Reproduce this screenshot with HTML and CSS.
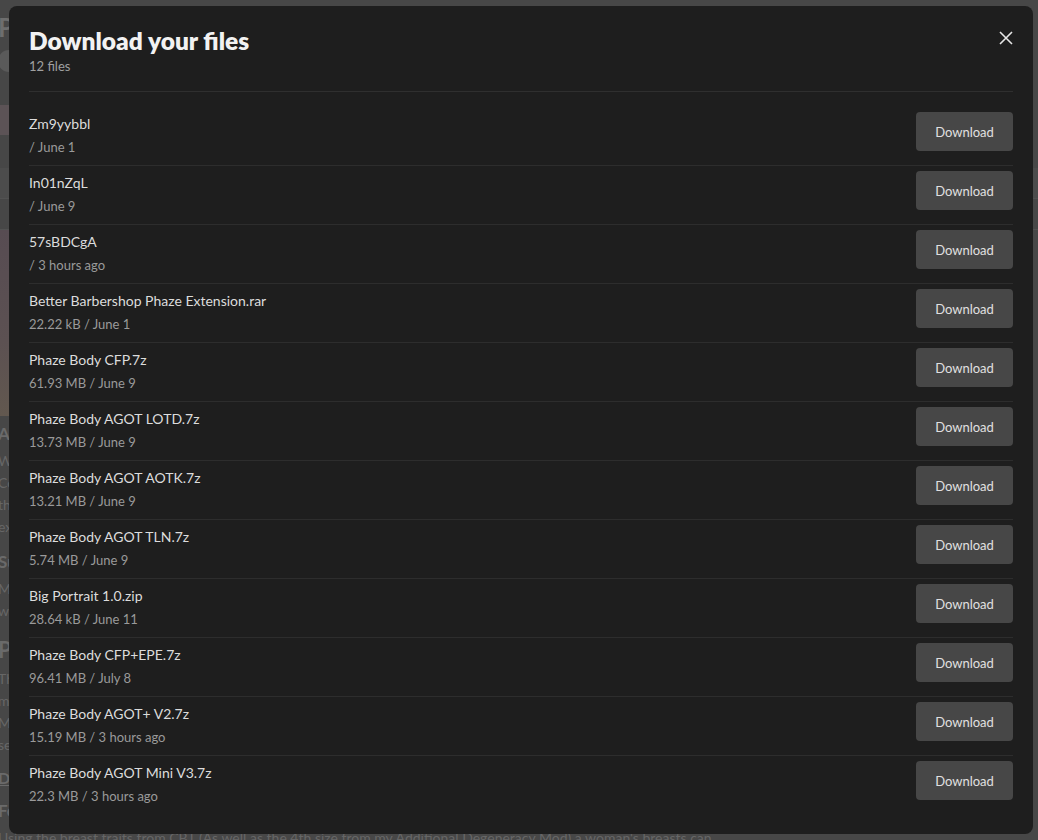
FILE: index.html
```html
<!DOCTYPE html>
<html lang="en">
<head>
    <meta charset="UTF-8">
    <meta name="viewport" content="width=device-width, initial-scale=1.0">
    <title>Download your files</title>
    <link rel="stylesheet" href="styles.css">
</head>
<body>
    <!-- page behind the dialog, mostly covered -->
    <div class="page">
        <div class="page-title">Phaze Body</div>
        <div class="page-avatar"></div>
        <div class="page-thumb"></div>
        <div class="page-tabs">
            <div class="page-tab"></div>
            <div class="page-tab"></div>
        </div>
        <div class="page-photo"></div>

        <h3 class="page-head">About</h3>
        <p class="page-text">When<br>Compatible<br>the<br>extensions</p>

        <h3 class="page-head">Support</h3>
        <p class="page-text">Mods<br>will</p>

        <h2 class="page-head big">Patches</h2>
        <p class="page-text">The<br>must<br>Make<br>see</p>
        <p class="page-link">Dependencies</p>

        <h3 class="page-head">Features</h3>
        <p class="page-text">Using the breast traits from CBT (As well as the 4th size from my Additional Degeneracy Mod) a woman's breasts can</p>
    </div>

    <div class="backdrop">
        <div class="modal">
            <div class="modal-header">
                <div>
                    <h1 class="modal-title">Download your files</h1>
                    <div class="modal-count">12 files</div>
                </div>
                <button class="close-btn" aria-label="Close">
                    <svg width="14" height="14" viewBox="0 0 14 14">
                        <path d="M1 1 L13 13 M13 1 L1 13" stroke="#e6e6e6" stroke-width="1.6" fill="none"/>
                    </svg>
                </button>
            </div>

            <ul class="file-list">
                <li class="file-row">
                    <div class="file-info"><div class="file-name">Zm9yybbl</div><div class="file-meta">/ June 1</div></div>
                    <button class="download-btn">Download</button>
                </li>
                <li class="file-row">
                    <div class="file-info"><div class="file-name">In01nZqL</div><div class="file-meta">/ June 9</div></div>
                    <button class="download-btn">Download</button>
                </li>
                <li class="file-row">
                    <div class="file-info"><div class="file-name">57sBDCgA</div><div class="file-meta">/ 3 hours ago</div></div>
                    <button class="download-btn">Download</button>
                </li>
                <li class="file-row">
                    <div class="file-info"><div class="file-name">Better Barbershop Phaze Extension.rar</div><div class="file-meta">22.22 kB / June 1</div></div>
                    <button class="download-btn">Download</button>
                </li>
                <li class="file-row">
                    <div class="file-info"><div class="file-name">Phaze Body CFP.7z</div><div class="file-meta">61.93 MB / June 9</div></div>
                    <button class="download-btn">Download</button>
                </li>
                <li class="file-row">
                    <div class="file-info"><div class="file-name">Phaze Body AGOT LOTD.7z</div><div class="file-meta">13.73 MB / June 9</div></div>
                    <button class="download-btn">Download</button>
                </li>
                <li class="file-row">
                    <div class="file-info"><div class="file-name">Phaze Body AGOT AOTK.7z</div><div class="file-meta">13.21 MB / June 9</div></div>
                    <button class="download-btn">Download</button>
                </li>
                <li class="file-row">
                    <div class="file-info"><div class="file-name">Phaze Body AGOT TLN.7z</div><div class="file-meta">5.74 MB / June 9</div></div>
                    <button class="download-btn">Download</button>
                </li>
                <li class="file-row">
                    <div class="file-info"><div class="file-name">Big Portrait 1.0.zip</div><div class="file-meta">28.64 kB / June 11</div></div>
                    <button class="download-btn">Download</button>
                </li>
                <li class="file-row">
                    <div class="file-info"><div class="file-name">Phaze Body CFP+EPE.7z</div><div class="file-meta">96.41 MB / July 8</div></div>
                    <button class="download-btn">Download</button>
                </li>
                <li class="file-row">
                    <div class="file-info"><div class="file-name">Phaze Body AGOT+ V2.7z</div><div class="file-meta">15.19 MB / 3 hours ago</div></div>
                    <button class="download-btn">Download</button>
                </li>
                <li class="file-row">
                    <div class="file-info"><div class="file-name">Phaze Body AGOT Mini V3.7z</div><div class="file-meta">22.3 MB / 3 hours ago</div></div>
                    <button class="download-btn">Download</button>
                </li>
            </ul>
        </div>
    </div>
</body>
</html>
```

FILE: styles.css
```css
body {
    margin: 0;
    height: 840px;
    overflow: hidden;
    background-color: #474747;
    font-family: Lato, "Noto Sans", sans-serif;
}

/* background page */
.page {
    margin-left: -2px;
    color: #666;
    font-size: 14px;
}

.page-title {
    padding-top: 12px;
    font-size: 26px;
    font-weight: bold;
    line-height: 30px;
    color: #6e6e6e;
}

.page-avatar {
    width: 22px;
    height: 22px;
    margin: 8px 0 0 0;
    border-radius: 50%;
    background: #5a5a5a;
}

.page-thumb {
    width: 40px;
    height: 30px;
    margin-top: 33px;
    background: #5c5356;
}

.page-tabs {
    margin-top: 33px;
}

.page-tab {
    height: 30px;
    border-bottom: 1px solid #525252;
}

.page-tab:first-child {
    background: #4c4c4c;
}

.page-photo {
    width: 300px;
    height: 186px;
    background: linear-gradient(180deg, #574c52 0%, #5c5152 60%, #62584f 100%);
}

.page-head {
    margin: 6px 0 4px;
    font-size: 17px;
    line-height: 24px;
    color: #6a6a6a;
}

.page-head.big {
    margin-top: 14px;
    font-size: 22px;
    line-height: 28px;
}

.page-text {
    margin: 0 0 12px;
    line-height: 22px;
}

.page-link {
    margin: 0 0 12px;
    font-weight: bold;
    font-size: 16px;
    text-decoration: underline;
    color: #6a6a6a;
}

/* dialog */
.backdrop {
    position: fixed;
    top: 0;
    left: 0;
    right: 0;
    bottom: 0;
}

.modal {
    width: 984px;
    margin: 6px 0 0 9px;
    padding: 20px;
    background: #1e1e1e;
    border-radius: 8px;
}

.modal-header {
    display: flex;
    justify-content: space-between;
    align-items: flex-start;
    padding-bottom: 15px;
    border-bottom: 1px solid #2f2f2f;
}

.modal-title {
    margin: 0;
    font-size: 24.5px;
    line-height: 30px;
    font-weight: 800;
    color: #f2f2f2;
}

.modal-count {
    font-size: 13px;
    line-height: 20px;
    color: #a0a0a0;
}

.close-btn {
    margin: 5px 0 0 0;
    padding: 0;
    width: 14px;
    height: 14px;
    background: none;
    border: none;
    cursor: pointer;
    display: flex;
}

.file-list {
    list-style: none;
    margin: 15px 0 0;
    padding: 0;
}

.file-row {
    display: flex;
    justify-content: space-between;
    align-items: flex-start;
    height: 53px;
    padding-top: 5px;
    border-bottom: 1px solid #2d2d2d;
}

.file-row:last-child {
    border-bottom: none;
}

.file-info {
    padding-top: 2px;
}

.file-name {
    font-size: 14px;
    line-height: 20px;
    color: #dcdcdc;
}

.file-meta {
    margin-top: 3px;
    font-size: 13px;
    line-height: 20px;
    color: #9a9a9a;
}

.download-btn {
    width: 97px;
    height: 39px;
    background: #474747;
    color: #e0e0e0;
    border: none;
    border-radius: 4px;
    font-family: inherit;
    font-size: 13px;
    cursor: pointer;
}

.download-btn:hover {
    background: #555;
}
```
